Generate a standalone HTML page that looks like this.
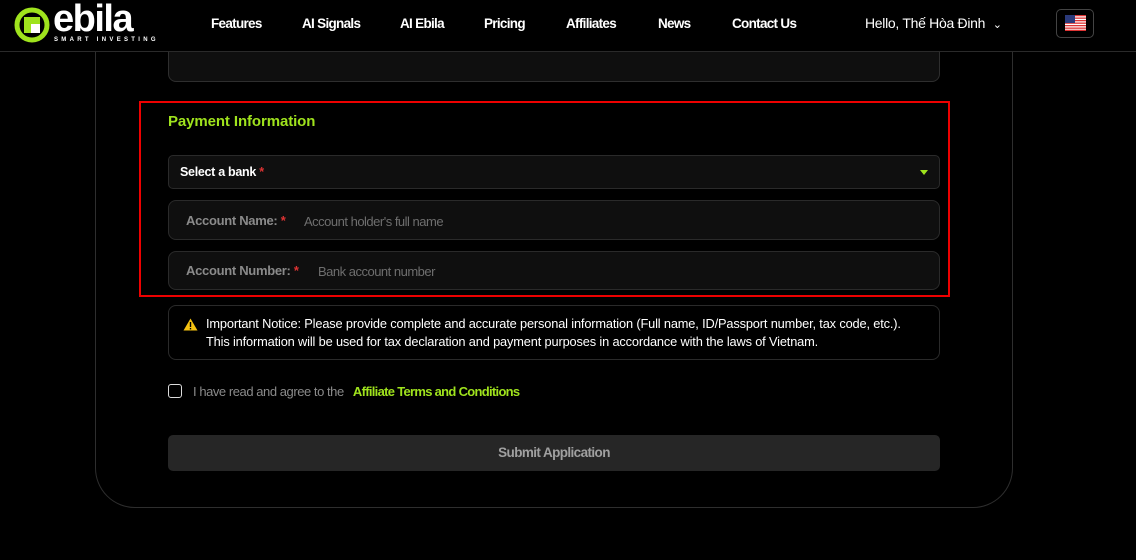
<!DOCTYPE html>
<html><head><meta charset="utf-8"><style>
*{box-sizing:border-box;margin:0;padding:0}
body{width:1136px;height:560px;background:#000;font-family:"Liberation Sans","Noto Sans CJK SC",sans-serif;color:#fff;position:relative;overflow:hidden}
.hdr{position:absolute;left:0;top:0;width:1136px;height:52px;border-bottom:1px solid #2a2a2a;background:#000;z-index:2}
.nav a{position:absolute;top:16px;font-size:13.5px;color:#fff;text-decoration:none;letter-spacing:-0.7px;font-weight:bold}
.card{position:absolute;left:95px;top:-40px;width:918px;height:548px;border:1px solid #2e2e2e;border-radius:40px}
.ta{position:absolute;left:168px;top:40px;width:772px;height:42px;background:#0f0f0f;border:1px solid #2e2e2e;border-radius:8px}
.red{position:absolute;left:139px;top:101px;width:811px;height:196px;border:2px solid #e00}
.fld{position:absolute;left:168px;width:772px;background:#0f0f0f;border:1px solid #2a2a2a;border-radius:8px;font-size:13px}
.lbl{color:#8a8a8a;font-weight:bold;letter-spacing:-0.3px}
.ph{color:#6e6e6e;letter-spacing:-0.5px}
.st{color:#d33}
</style></head><body>
<div class="hdr">
<svg style="position:absolute;left:14px;top:7px" width="36" height="36" viewBox="0 0 36 36"><circle cx="18" cy="18" r="15" fill="none" stroke="#9fe31d" stroke-width="5"/><path d="M10 10h16v7h-9v9h-7z" fill="#9fe31d"/><path d="M17 17h9v9h-9z" fill="#fff"/></svg>
<div style="position:absolute;left:53px;top:-2px;font-size:38px;font-weight:bold;letter-spacing:-1.5px">ebila</div>
<div style="position:absolute;left:54px;top:37px;font-size:6px;font-weight:bold;letter-spacing:3.3px">SMART INVESTING</div>
<div class="nav"><a style="left:211px">Features</a><a style="left:302px">AI Signals</a><a style="left:400px">AI Ebila</a><a style="left:484px">Pricing</a><a style="left:566px">Affiliates</a><a style="left:658px">News</a><a style="left:732px">Contact Us</a></div>
<div style="position:absolute;left:865px;top:15px;font-size:14px;letter-spacing:-0.3px">Hello, Thế Hòa Đinh <span style="margin-left:4px;font-size:11px">&#8964;</span></div>
<div style="position:absolute;left:1056px;top:9px;width:38px;height:29px;border:1px solid #444;border-radius:5px"><svg style="position:absolute;left:8px;top:5px" width="21" height="16" viewBox="0 0 21 16"><rect width="21" height="16" fill="#fff"/><g fill="#d33"><rect y="0" width="21" height="1.3"/><rect y="2.5" width="21" height="1.3"/><rect y="5" width="21" height="1.3"/><rect y="7.5" width="21" height="1.3"/><rect y="10" width="21" height="1.3"/><rect y="12.5" width="21" height="1.3"/><rect y="14.7" width="21" height="1.3"/></g><rect width="10" height="8" fill="#2b3a7a"/></svg></div>
</div>
<div class="card"></div>
<div class="ta"></div>
<div class="red"></div>
<div style="position:absolute;left:168px;top:113px;font-size:15px;font-weight:bold;color:#9fe31d;letter-spacing:-0.1px">Payment Information</div>
<div class="fld" style="top:155px;height:34px;border-radius:5px"><span style="position:absolute;left:11px;top:9px;font-weight:bold;font-size:12.5px;letter-spacing:-0.3px">Select a bank <span class="st">*</span></span><span style="position:absolute;right:11px;top:14px;width:0;height:0;border-left:4px solid transparent;border-right:4px solid transparent;border-top:5px solid #9fe31d"></span></div>
<div class="fld" style="top:200px;height:40px"><span class="lbl" style="position:absolute;left:17px;top:12px">Account Name: <span class="st">*</span></span><span class="ph" style="position:absolute;left:135px;top:13px">Account holder's full name</span></div>
<div class="fld" style="top:251px;height:39px"><span class="lbl" style="position:absolute;left:17px;top:11px">Account Number: <span class="st">*</span></span><span class="ph" style="position:absolute;left:149px;top:12px">Bank account number</span></div>
<div style="position:absolute;left:168px;top:305px;width:772px;height:55px;border:1px solid #2a2a2a;border-radius:8px;font-size:12.8px;line-height:18px;color:#fff;padding:9px 0 0 37px;letter-spacing:-0.15px">
<svg style="position:absolute;left:14px;top:12px" width="15" height="13" viewBox="0 0 15 13"><path d="M7.5 0.5L14.5 12.5H0.5Z" fill="#f5c211"/><rect x="6.8" y="4" width="1.4" height="5" fill="#000"/><rect x="6.8" y="10" width="1.4" height="1.4" fill="#000"/></svg>
Important Notice: Please provide complete and accurate personal information (Full name, ID/Passport number, tax code, etc.).<br>This information will be used for tax declaration and payment purposes in accordance with the laws of Vietnam.</div>
<div style="position:absolute;left:168px;top:384px;width:14px;height:14px;border:1.5px solid #ddd;border-radius:3px"></div>
<div style="position:absolute;left:193px;top:384px;font-size:13px;color:#8a8a8a;letter-spacing:-0.45px">I have read and agree to the <b style="color:#9fe31d;margin-left:6px;letter-spacing:-0.7px">Affiliate Terms and Conditions</b></div>
<div style="position:absolute;left:168px;top:435px;width:772px;height:36px;background:#262626;border-radius:5px;text-align:center;line-height:36px;font-size:13.5px;font-weight:bold;color:#a0a0a0;letter-spacing:-0.6px">Submit Application</div>
</body></html>
